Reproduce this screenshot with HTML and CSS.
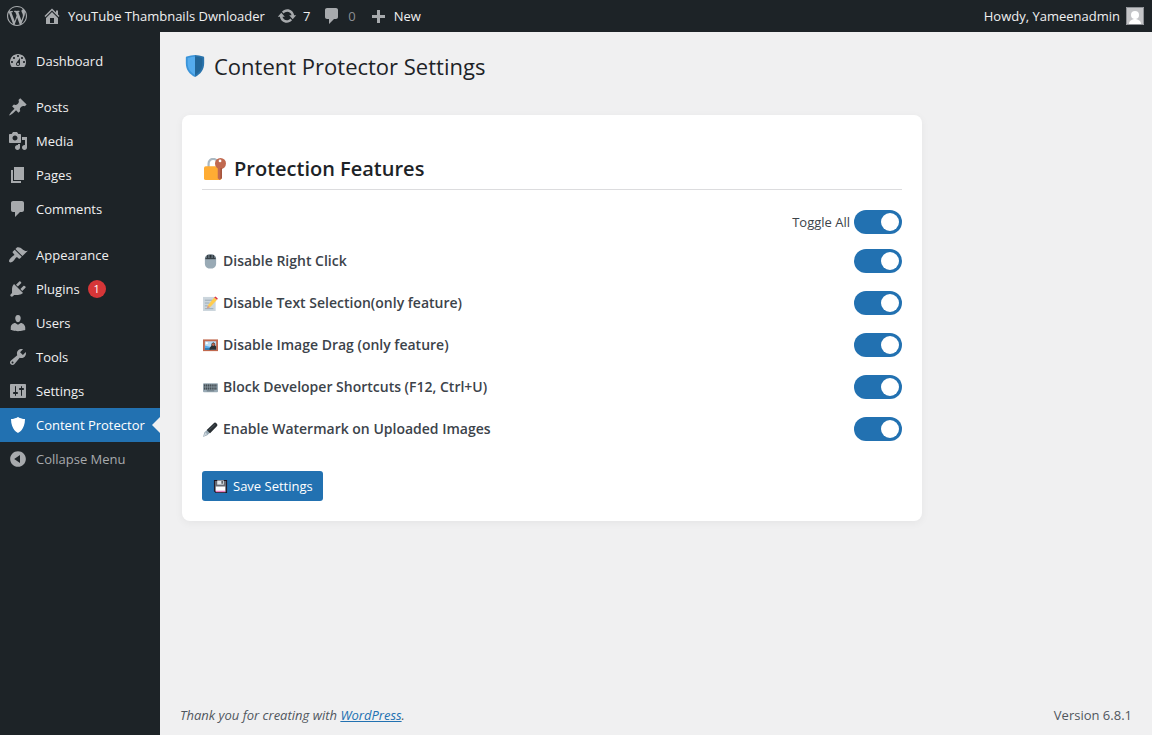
FILE: index.html
```html
<!DOCTYPE html>
<html lang="en">
<head>
    <meta charset="UTF-8">
    <meta name="viewport" content="width=device-width, initial-scale=1.0">
    <title>Content Protector Settings</title>
    <link rel="stylesheet" href="styles.css">
</head>
<body>
    <!-- Admin Bar -->
    <header class="admin-bar">
        <a class="bar-item bar-logo" href="#" aria-label="About WordPress">
            <svg class="icon" viewBox="0 0 20 20"><path d="M20 10c0-5.51-4.49-10-10-10C4.48 0 0 4.49 0 10c0 5.52 4.48 10 10 10 5.51 0 10-4.48 10-10zM7.78 15.37L4.37 6.22c.55-.02 1.17-.08 1.17-.08.5-.06.44-1.13-.06-1.11 0 0-1.45.11-2.37.11-.18 0-.37 0-.58-.01C4.12 2.69 6.87 1.11 10 1.11c2.33 0 4.45.87 6.05 2.34-.68-.11-1.65.39-1.65 1.58 0 .74.45 1.36.9 2.1.35.61.55 1.36.55 2.46 0 1.49-1.4 5-1.4 5l-3.03-8.37c.54-.02.82-.17.82-.17.5-.05.44-1.25-.06-1.22 0 0-1.44.12-2.38.12-.87 0-2.33-.12-2.33-.12-.5-.03-.56 1.2-.06 1.22l.92.08 1.26 3.41zM17.41 10c.24-.64.74-1.87.43-4.25.7 1.29 1.05 2.71 1.05 4.25 0 3.29-1.73 6.24-4.4 7.78.97-2.59 1.94-5.2 2.92-7.78zM6.1 18.09C3.12 16.65 1.11 13.53 1.11 10c0-1.3.23-2.48.72-3.59C3.25 10.3 4.67 14.2 6.1 18.09zm4.03-6.63l2.58 6.98c-.86.29-1.76.45-2.71.45-.79 0-1.57-.11-2.29-.33.81-2.38 1.62-4.74 2.42-7.1z"/></svg>
        </a>
        <a class="bar-item" href="#">
            <svg class="icon" viewBox="0 0 20 20"><path fill-rule="evenodd" d="M16 8.5l1.53 1.53-1.06 1.06L10 4.6l-6.47 6.49-1.06-1.06L10 2.5l4 4v-2h2v4zm-6-2.46l6 5.99V18H4v-5.97zM12 17v-5H8v5h4z"/></svg>
            <span>YouTube Thambnails Dwnloader</span>
        </a>
        <a class="bar-item" href="#">
            <svg class="icon" viewBox="0 0 20 20"><path d="M10.2 3.28c3.53 0 6.43 2.61 6.92 6h2.08l-3.5 4-3.5-4h2.32c-.45-1.97-2.21-3.45-4.32-3.45-1.45 0-2.73.71-3.54 1.78L4.95 5.66C6.23 4.2 8.11 3.28 10.2 3.28zm-.4 13.44c-3.52 0-6.43-2.61-6.92-6H.8l3.5-4c1.17 1.33 2.33 2.67 3.5 4H5.48c.45 1.97 2.21 3.45 4.32 3.45 1.45 0 2.73-.71 3.54-1.78l1.71 1.95c-1.28 1.46-3.15 2.38-5.25 2.38z"/></svg>
            <span>7</span>
        </a>
        <a class="bar-item" href="#">
            <svg class="icon" viewBox="0 0 20 20"><path d="M5 2h9c1.1 0 2 .9 2 2v7c0 1.1-.9 2-2 2h-2l-5 5v-5H5c-1.1 0-2-.9-2-2V4c0-1.1.9-2 2-2z"/></svg>
            <span class="muted">0</span>
        </a>
        <a class="bar-item" href="#">
            <svg class="icon" viewBox="0 0 20 20"><path d="M17 9v3h-5v5H9v-5H4V9h5V4h3v5h5z"/></svg>
            <span>New</span>
        </a>
        <a class="bar-item bar-account" href="#">
            <span>Howdy, Yameenadmin</span>
            <svg class="avatar" viewBox="0 0 18 18"><path fill="#c3c4c7" d="M0 0h18v18H0z"/><circle cx="9" cy="8" r="4" fill="#fff"/><path fill="#fff" d="M3 17c0-3 2-4 5-5h2c3 1 5 2 5 5z"/><path fill="none" stroke="#8c8f94" d="M.5.5h17v17H.5z"/></svg>
        </a>
    </header>

    <div class="layout">
        <!-- Sidebar Menu -->
        <nav class="sidebar">
            <ul class="menu">
                <li><a class="menu-item" href="#">
                    <svg class="icon" viewBox="0 0 20 20"><path fill-rule="evenodd" d="M3.76 16h12.48c1.1-1.37 1.76-3.11 1.76-5 0-4.42-3.58-8-8-8s-8 3.58-8 8c0 1.89.66 3.63 1.76 5zM10 4c.55 0 1 .45 1 1s-.45 1-1 1-1-.45-1-1 .45-1 1-1zM6 6c.55 0 1 .45 1 1s-.45 1-1 1-1-.45-1-1 .45-1 1-1zm8 0c.55 0 1 .45 1 1s-.45 1-1 1-1-.45-1-1 .45-1 1-1zm-5.37 5.55L12 7v6c0 1.1-.9 2-2 2s-2-.9-2-2c0-.57.24-1.08.63-1.45zM4 10c.55 0 1 .45 1 1s-.45 1-1 1-1-.45-1-1 .45-1 1-1zm12 0c.55 0 1 .45 1 1s-.45 1-1 1-1-.45-1-1 .45-1 1-1zm-5 3c0-.55-.45-1-1-1s-1 .45-1 1 .45 1 1 1 1-.45 1-1z"/></svg>
                    Dashboard</a></li>
                <li class="separator"></li>
                <li><a class="menu-item" href="#">
                    <svg class="icon" viewBox="0 0 20 20"><path d="M10.44 3.02l1.82-1.82 6.36 6.35-1.83 1.82c-1.05-.68-2.48-.57-3.41.36l-.75.75c-.92.93-1.04 2.35-.35 3.41l-1.83 1.82-2.41-2.41-2.8 2.79c-.42.42-3.38 2.71-3.8 2.29s1.86-3.39 2.28-3.81l2.79-2.79L4.1 9.36l1.83-1.82c1.05.69 2.48.57 3.4-.36l.75-.75c.93-.92 1.05-2.35.36-3.41z"/></svg>
                    Posts</a></li>
                <li><a class="menu-item" href="#">
                    <svg class="icon" viewBox="0 0 20 20"><path fill-rule="evenodd" d="M13 11V4c0-.55-.45-1-1-1h-1.67L9 1H5L3.67 3H2c-.55 0-1 .45-1 1v7c0 .55.45 1 1 1h10c.55 0 1-.45 1-1zM7 4.5c1.38 0 2.5 1.12 2.5 2.5S8.38 9.5 7 9.5 4.5 8.38 4.5 7 5.62 4.5 7 4.5zM14 6h5v10.5c0 1.38-1.12 2.5-2.5 2.5S14 17.88 14 16.5s1.12-2.5 2.5-2.5c.17 0 .34.02.5.05V9h-3V6zm-4 8.05V13h2v3.5c0 1.38-1.12 2.5-2.5 2.5S7 17.88 7 16.5 8.12 14 9.5 14c.17 0 .34.02.5.05z"/></svg>
                    Media</a></li>
                <li><a class="menu-item" href="#">
                    <svg class="icon" viewBox="0 0 20 20"><path d="M6 15V2h10v13H6zm-1 1h8v2H3V5h2v11z"/></svg>
                    Pages</a></li>
                <li><a class="menu-item" href="#">
                    <svg class="icon" viewBox="0 0 20 20"><path d="M5 2h9c1.1 0 2 .9 2 2v7c0 1.1-.9 2-2 2h-2l-5 5v-5H5c-1.1 0-2-.9-2-2V4c0-1.1.9-2 2-2z"/></svg>
                    Comments</a></li>
                <li class="separator"></li>
                <li><a class="menu-item" href="#">
                    <svg class="icon" viewBox="0 0 20 20"><path d="M14.48 11.06L7.41 3.99l1.5-1.5c.5-.56 2.3-.47 3.51.32 1.21.8 1.43 1.28 2.91 2.1 1.18.64 2.45 1.26 4.45.85zm-.71.71L6.7 4.7 4.93 6.47c-.39.39-.39 1.02 0 1.41l1.06 1.06c.39.39.39 1.03 0 1.42-.6.6-1.43 1.11-2.21 1.69-.35.26-.7.53-1.01.84C1.43 14.23.4 16.08 1.4 17.07c.99 1 2.84-.03 4.18-1.36.31-.31.58-.66.85-1.02.57-.78 1.08-1.61 1.69-2.21.39-.39 1.02-.39 1.41 0l1.06 1.06c.39.39 1.02.39 1.41 0z"/></svg>
                    Appearance</a></li>
                <li><a class="menu-item" href="#">
                    <svg class="icon" viewBox="0 0 20 20"><path d="M13.11 4.36L9.87 7.6 8 5.73l3.24-3.24c.35-.34 1.05-.2 1.56.32.52.51.66 1.21.31 1.55zm-8 1.77l.91-1.12 9.01 9.01-1.19.84c-.71.71-2.63 1.16-3.82 1.16H6.14L4.9 17.26c-.59.59-1.54.59-2.12 0-.59-.58-.59-1.53 0-2.12l1.24-1.24v-3.88c0-1.13.4-3.19 1.09-3.89zm7.26 3.97l3.24-3.24c.34-.35 1.04-.21 1.55.31.52.51.66 1.21.31 1.55l-3.24 3.25z"/></svg>
                    Plugins <span class="count">1</span></a></li>
                <li><a class="menu-item" href="#">
                    <svg class="icon" viewBox="0 0 20 20"><path d="M10 9.25c-2.27 0-2.73-3.44-2.73-3.44C7 4.02 7.82 2 9.97 2c2.16 0 2.98 2.02 2.71 3.81 0 0-.41 3.44-2.68 3.44zm0 2.57L12.72 10c2.39 0 4.52 2.33 4.52 4.53v2.49s-3.65 1.13-7.24 1.13c-3.65 0-7.24-1.13-7.24-1.13v-2.49c0-2.25 1.94-4.48 4.47-4.48z"/></svg>
                    Users</a></li>
                <li><a class="menu-item" href="#">
                    <svg class="icon" viewBox="0 0 20 20"><path fill-rule="evenodd" d="M16.68 9.77c-1.34 1.34-3.3 1.67-4.95.99l-5.41 6.52c-.99.99-2.59.99-3.58 0s-.99-2.59 0-3.57l6.52-5.42c-.68-1.65-.35-3.61.99-4.95 1.28-1.28 3.12-1.62 4.72-1.06l-2.89 2.89 2.82 2.82 2.86-2.87c.53 1.58.18 3.39-1.08 4.65zM3.81 16.21c.4.39 1.04.39 1.43 0 .4-.4.4-1.04 0-1.43-.39-.4-1.03-.4-1.43 0-.39.39-.39 1.03 0 1.43z"/></svg>
                    Tools</a></li>
                <li><a class="menu-item" href="#">
                    <svg class="icon" viewBox="0 0 20 20"><path fill-rule="evenodd" d="M18 16V4c0-.55-.45-1-1-1H3c-.55 0-1 .45-1 1v12c0 .55.45 1 1 1h14c.55 0 1-.45 1-1zM8 11h1c.55 0 1 .45 1 1s-.45 1-1 1H8v1.5c0 .28-.22.5-.5.5s-.5-.22-.5-.5V13H6c-.55 0-1-.45-1-1s.45-1 1-1h1V5.5c0-.28.22-.5.5-.5s.5.22.5.5V11zm5-2h-1c-.55 0-1-.45-1-1s.45-1 1-1h1V5.500c0-.28.22-.5.5-.5s.5.22.5.5V7h1c.55 0 1 .45 1 1s-.45 1-1 1h-1v5.500c0 .28-.22.5-.5.5s-.5-.22-.5-.5V9z"/></svg>
                    Settings</a></li>
                <li><a class="menu-item current" href="#">
                    <svg class="icon" viewBox="0 0 20 20"><path d="M10 2s3 2 7 2c0 11-7 14-7 14S3 15 3 4c4 0 7-2 7-2z"/></svg>
                    Content Protector</a></li>
                <li><button type="button" class="menu-item collapse">
                    <svg class="icon" viewBox="0 0 20 20"><path fill-rule="evenodd" d="M10 2.16c4.33 0 7.84 3.51 7.84 7.84s-3.51 7.84-7.84 7.84S2.16 14.33 2.16 10 5.67 2.16 10 2.16zm2 11.72V6.12L6.18 9.97z"/></svg>
                    Collapse Menu</button></li>
            </ul>
        </nav>

        <div class="content">
            <main class="wrap">
                <h1 class="page-title">
                    <svg class="emoji" viewBox="0 0 24 24"><path fill="#3b94d9" d="M12 0C9 0 6 1 3 1.600c-.6.2-1 .5-1 1V9c0 7 4 12 10 15z"/><path fill="#2a74ad" d="M12 0c3 0 6 1 9 1.600.6.2 1 .5 1 1V9c0 7-4 12-10 15z"/><path fill="#55acee" d="M12 2C9.500 2 7 2.600 4 3.400V9c0 6 3 10 8 12.800z"/><path fill="#226699" d="M12 2c2.500 0 5 .6 8 1.400V9c0 6-3 10-8 12.800z"/></svg>
                    Content Protector Settings
                </h1>

                <form class="card">
                    <h2 class="card-title">
                        <svg class="emoji" viewBox="0 0 24 24"><path fill="none" stroke="#aab8c2" stroke-width="2.400" d="M5 12V6a5 5 0 0 1 10 0v6"/><rect x="0" y="9" width="19" height="15" rx="2" fill="#ffac33"/><g fill="#c1694f"><path d="M15 9h4.500v13L17 24l-2-2z"/><circle cx="18" cy="6" r="6"/></g><path fill="#a0503a" d="M18 11h1.500v11L18 23z"/><circle cx="17.500" cy="3.200" r="1.500" fill="#fff"/></svg>
                        Protection Features
                    </h2>

                    <div class="toggle-all">
                        <label for="toggleAll">Toggle All</label>
                        <input type="checkbox" class="switch" id="toggleAll" checked>
                    </div>

                    <div class="feature">
                        <label for="rightClick">
                            <svg class="emoji-small" viewBox="0 0 16 16"><path fill="#99aab5" d="M2 5C2.500 1.500 5 .5 8 .5s5.500 1 6 4.500v5c0 4-3 5.500-6 5.500S2 14 2 10z"/><path fill="#66757f" d="M2.300 4C3 1.500 5 .5 8 .5s5 1 5.700 3.500L13 5H3z"/><path stroke="#292f33" fill="none" d="M5 1v3.500M11 1v3.500M2.500 5h11"/><path fill="#292f33" d="M7 1h2v3H7z"/></svg>
                            Disable Right Click</label>
                        <input type="checkbox" class="switch" id="rightClick" checked>
                    </div>
                    <div class="feature">
                        <label for="textSelection">
                            <svg class="emoji-small" viewBox="0 0 16 16"><path fill="#ccd6dd" d="M0 1h13.500v15H0z"/><path stroke="#99aab5" d="M2 4.500h8m-8 3h5m-5 3h3m-3 3h9"/><path fill="#ffcc4d" d="M5 10l7-8.500L15 4l-7.500 8z"/><path fill="#dd2e44" d="M12 1.500l1.200-1 2.600 2.200L15 4z"/><path fill="#d99e82" d="M5 10l2.500 2-3.500 1.500z"/></svg>
                            Disable Text Selection(only feature)</label>
                        <input type="checkbox" class="switch" id="textSelection" checked>
                    </div>
                    <div class="feature">
                        <label for="imageDrag">
                            <svg class="emoji-small" viewBox="0 0 16 16"><path fill="#c1694f" d="M0 1.500h16v12.500H0z"/><path fill="#bbddf5" d="M2 3.500h12v9H2z"/><path fill="#55acee" d="M2 8l4 1 3 1v2.500H2z"/><path fill="#226699" d="M2 11h6v1.500H2z"/><path fill="#292f33" d="M7 12.500C7 9 9 9 9 8V6l2-1.500L13 6v2l1 1v3.500z"/><circle cx="11" cy="7" r="1.500" fill="#c1694f"/><circle cx="4" cy="5.500" r="1.200" fill="#fff"/></svg>
                            Disable Image Drag (only feature)</label>
                        <input type="checkbox" class="switch" id="imageDrag" checked>
                    </div>
                    <div class="feature">
                        <label for="shortcuts">
                            <svg class="emoji-small" viewBox="0 0 16 16"><rect y="3.500" width="16" height="9.500" rx="1" fill="#99aab5"/><g stroke="#292f33" stroke-width="1.200" stroke-dasharray="1.500 .5"><path d="M1 5.500h14M1 7.500h14M1 9.500h14"/></g><path stroke="#66757f" d="M4 11.500h8"/></svg>
                            Block Developer Shortcuts (F12, Ctrl+U)</label>
                        <input type="checkbox" class="switch" id="shortcuts" checked>
                    </div>
                    <div class="feature">
                        <label for="watermark">
                            <svg class="emoji-small" viewBox="0 0 16 16"><path fill="#99aab5" d="M0 16l1.500-5L5 8l3 3-3.500 3z"/><path fill="#ccd6dd" d="M.5 15.500L2.500 11l2 2z"/><path fill="#292f33" d="M4 8.500l7.500-7.300c1-1 2-.7 3 .3s1.300 2 .3 3L7.500 12z"/><path stroke="#66757f" stroke-width=".6" d="M6 9l7-6.500"/></svg>
                            Enable Watermark on Uploaded Images</label>
                        <input type="checkbox" class="switch" id="watermark" checked>
                    </div>

                    <button type="submit" class="save-btn">
                        <svg class="emoji-small" viewBox="0 0 16 16"><path fill="#1d1520" d="M1 1h14v14H3l-2-2z"/><path fill="#686b73" d="M2 2h12v12H3.500L2 12.500z"/><path fill="#e1e8ed" d="M4.500 1.500h7V6h-7z"/><path fill="#444b52" d="M9 2h1.500v3H9z"/><path fill="#fff" d="M3 8h10v5H3z"/><path fill="#ea7bc0" d="M3 12.500h10V14H3z"/></svg>
                        Save Settings
                    </button>
                </form>
            </main>

            <footer class="footer">
                <p class="thanks">Thank you for creating with <a href="#">WordPress</a>.</p>
                <p>Version 6.8.1</p>
            </footer>
        </div>
    </div>

    <script>
        // Master switch drives every feature switch
        const toggleAll = document.getElementById('toggleAll');
        const features = document.querySelectorAll('.feature .switch');

        toggleAll.addEventListener('change', () => {
            features.forEach(item => item.checked = toggleAll.checked);
        });
    </script>
</body>
</html>
```
FILE: styles.css
```css
:root {
    --bar-bg: #1d2327;
    --page-bg: #f0f0f1;
    --accent: #2271b1;
    --icon: #a7aaad;
    --text: #3c434a;
    --heading: #1d2327;
}

* {
    margin: 0;
    padding: 0;
    box-sizing: border-box;
}

body {
    display: flex;
    flex-direction: column;
    min-height: 100vh;
    background: var(--page-bg);
    color: var(--text);
    font-family: "Segoe UI", "Open Sans", "Noto Sans", sans-serif;
    font-size: 13px;
    line-height: 18px;
}

.icon {
    width: 20px;
    height: 20px;
    flex-shrink: 0;
    fill: var(--icon);
}

/* Admin bar */
.admin-bar {
    display: flex;
    align-items: center;
    gap: 12px;
    height: 32px;
    padding: 0 8px 0 7px;
    background: var(--bar-bg);
}

.bar-item {
    display: flex;
    align-items: center;
    gap: 6px;
    color: #f0f0f1;
    text-decoration: none;
}

.bar-logo {
    padding-right: 3px;
}

.bar-account {
    margin-left: auto;
}

.muted {
    color: #8c8f94;
}

.avatar {
    width: 18px;
    height: 18px;
}

.layout {
    display: flex;
    flex: 1;
}

/* Sidebar */
.sidebar {
    width: 160px;
    flex-shrink: 0;
    padding-top: 12px;
    background: var(--bar-bg);
}

.menu {
    list-style: none;
}

.separator {
    height: 12px;
}

.menu-item {
    position: relative;
    display: flex;
    align-items: center;
    gap: 8px;
    width: 100%;
    height: 34px;
    padding: 0 8px;
    border: none;
    background: none;
    color: #f0f0f1;
    font: inherit;
    text-decoration: none;
    white-space: nowrap;
    cursor: pointer;
}

.menu-item.current {
    background: var(--accent);
    color: #fff;
}

.menu-item.current .icon {
    fill: #fff;
}

.menu-item.current::after {
    content: "";
    position: absolute;
    right: 0;
    border: 8px solid transparent;
    border-left: none;
    border-right-color: var(--page-bg);
}

.menu-item.collapse {
    color: var(--icon);
}

.count {
    width: 18px;
    height: 18px;
    border-radius: 9px;
    background: #d63638;
    color: #fff;
    font-size: 11px;
    text-align: center;
}

/* Content */
.content {
    display: flex;
    flex-direction: column;
    flex: 1;
    padding: 0 20px;
}

.wrap {
    flex: 1;
    padding: 19px 2px 0;
}

.page-title {
    display: flex;
    align-items: center;
    gap: 7px;
    margin-bottom: 34px;
    color: var(--heading);
    font-size: 22px;
    font-weight: 400;
    line-height: 30px;
}

.emoji {
    width: 22px;
    height: 22px;
    margin: 0 1px 0 2px;
}

.emoji-small {
    width: 15px;
    height: 15px;
    margin-left: 1px;
}

.card {
    max-width: 740px;
    padding: 40px 20px 20px;
    border-radius: 8px;
    background: #fff;
    box-shadow: 0 2px 8px rgba(0, 0, 0, 0.05);
}

.card-title {
    display: flex;
    align-items: center;
    gap: 7px;
    margin-bottom: 20px;
    padding-bottom: 6px;
    border-bottom: 1px solid #dcdcde;
    color: var(--heading);
    font-size: 20px;
    font-weight: 600;
    line-height: 28px;
}

.toggle-all {
    display: flex;
    justify-content: flex-end;
    align-items: center;
    gap: 4px;
    margin-bottom: 15px;
}

.feature {
    display: flex;
    justify-content: space-between;
    align-items: center;
    margin-bottom: 18px;
}

.feature label {
    display: flex;
    align-items: center;
    gap: 5px;
    font-size: 14px;
    font-weight: 600;
}

.switch {
    display: flex;
    align-items: center;
    appearance: none;
    width: 48px;
    height: 24px;
    padding: 0 3px;
    border-radius: 12px;
    background: #ccc;
    cursor: pointer;
}

.switch::before {
    content: "";
    width: 18px;
    height: 18px;
    border-radius: 50%;
    background: #fff;
}

.switch:checked {
    justify-content: flex-end;
    background: var(--accent);
}

.save-btn {
    display: flex;
    align-items: center;
    gap: 5px;
    height: 30px;
    margin-top: 30px;
    padding: 0 10px;
    border: none;
    border-radius: 3px;
    background: var(--accent);
    color: #fff;
    font: inherit;
    cursor: pointer;
}

.footer {
    display: flex;
    justify-content: space-between;
    padding: 10px 0 11px;
    color: #50575e;
}

.thanks {
    font-style: italic;
}

.footer a {
    color: var(--accent);
}
```
